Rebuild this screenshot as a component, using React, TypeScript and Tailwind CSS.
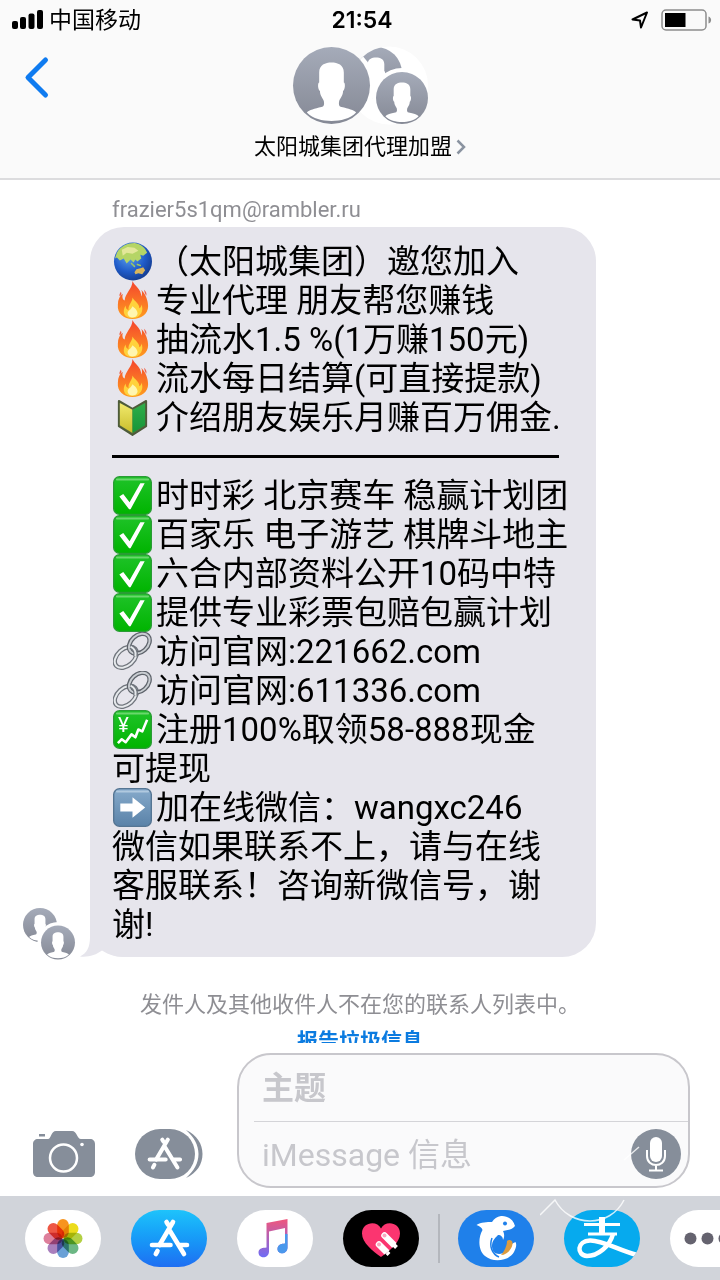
import { ReactNode } from "react";

type EmojiName = "globe" | "fire" | "beginner" | "check" | "link" | "chart" | "arrow";

type Line = { emoji?: EmojiName; text?: string; rule?: boolean };

const lines: Line[] = [
    { emoji: "globe", text: "（太阳城集团）邀您加入" },
    { emoji: "fire", text: "专业代理 朋友帮您赚钱" },
    { emoji: "fire", text: "抽流水1.5 %(1万赚150元)" },
    { emoji: "fire", text: "流水每日结算(可直接提款)" },
    { emoji: "beginner", text: "介绍朋友娱乐月赚百万佣金." },
    { rule: true },
    { emoji: "check", text: "时时彩 北京赛车 稳赢计划团" },
    { emoji: "check", text: "百家乐 电子游艺 棋牌斗地主" },
    { emoji: "check", text: "六合内部资料公开10码中特" },
    { emoji: "check", text: "提供专业彩票包赔包赢计划" },
    { emoji: "link", text: "访问官网:221662.com" },
    { emoji: "link", text: "访问官网:611336.com" },
    { emoji: "chart", text: "注册100%取领58-888现金" },
    { text: "可提现" },
    { emoji: "arrow", text: "加在线微信：wangxc246" },
    { text: "微信如果联系不上，请与在线" },
    { text: "客服联系！咨询新微信号，谢" },
    { text: "谢!" },
];

const emojiArt: Record<EmojiName, ReactNode> = {
    globe: (
        <>
            <circle cx="20.500" cy="20" r="19.500" fill="url(#sea)" />
            <path d="M4 11 C8 4 15 1 22 1 C29 2 33 6 35 11 L31 14 L28 13 L29 17 L25 20 L23 18 L21 21 L18 18 L14 22 L11 17 L7 19 L4 16 L2 17Z" fill="#b5d566" />
            <path d="M9 8 L15 5 L22 6 L26 9 L20 12 L14 11 L10 14Z" fill="#e3e79a" />
            <path d="M22 31 L24 28 L28 27 L31 26 L33 29 L30 33 L26 32 L23 33Z" fill="#d9b55c" />
            <path d="M19 22 L22 25 M25 23 L28 24" stroke="#9cc765" strokeWidth="1.6" strokeLinecap="round" />
        </>
    ),
    fire: (
        <>
            <path d="M20 0 C22 5 29 8 29 16 C30 14 30 11 29 9 C34 14 36 21 36 26 C36 34 29 39 20 39 C11 39 4 33 5 24 C5 19 7 15 10 13 C9 17 10 19 12 20 C12 13 20 8 20 0Z" fill="url(#flame)" />
            <path d="M20 17 C22 21 27 23 27 28 C29 27 29 25 29 24 C32 29 29 38 20 38 C11 38 9 31 13 25 C13 28 14 29 16 30 C15 25 20 22 20 17Z" fill="#ffd23c" />
            <path d="M20 26 C24 29 27 33 24 36 C21 39 15 37 15 33 C15 31 19 29 20 26Z" fill="#fff6b0" />
            <path d="M8 11 C7 13 6 14 7 16 C9 14 9 13 8 11Z M32 9 C34 11 35 13 34 15 C33 13 32 11 32 9Z" fill="#f0604a" />
        </>
    ),
    beginner: (
        <>
            <path d="M6 3 L20 11 L34 3 V29 L20 38 L6 29Z" fill="#5b6a3c" stroke="#4d5b3a" strokeWidth="2" strokeLinejoin="round" />
            <path d="M7 5 L20 12 V36 L7 28Z" fill="url(#leafL)" />
            <path d="M33 5 L20 12 V36 L33 28Z" fill="url(#leafR)" />
        </>
    ),
    check: (
        <>
            <rect x="0.7" y="0.7" width="38.6" height="38.6" rx="6" fill="url(#green)" stroke="#2a9c35" strokeWidth="1.4" />
            <path d="M4 3.5 H36" stroke="#8be08c" strokeWidth="2" strokeLinecap="round" opacity=".7" />
            <path d="M6.500 21 L10.500 18.500 L17 27 L28 7.500 L32.500 7.500 L18 34 L16.500 34Z" fill="#fff" />
        </>
    ),
    link: (
        <g fill="none">
            <ellipse cx="13" cy="26" rx="13" ry="8.5" transform="rotate(-42 13 26)" stroke="#70757d" strokeWidth="4.6" />
            <ellipse cx="13" cy="26" rx="13" ry="8.5" transform="rotate(-42 13 26)" stroke="#e6e9ec" strokeWidth="2" />
            <ellipse cx="27" cy="12" rx="12" ry="8.5" transform="rotate(-42 27 12)" stroke="#5e636b" strokeWidth="4.6" />
            <ellipse cx="27" cy="12" rx="12" ry="8.5" transform="rotate(-42 27 12)" stroke="#c9cdd2" strokeWidth="2" />
            <path d="M18 15 C22 17 24 20 23 25" stroke="#70757d" strokeWidth="4.6" />
            <path d="M18 15 C22 17 24 20 23 25" stroke="#e6e9ec" strokeWidth="2" />
        </g>
    ),
    chart: (
        <>
            <rect x="0.7" y="0.7" width="38.6" height="38.6" rx="6" fill="url(#green)" stroke="#2a9c35" strokeWidth="1.4" />
            <path d="M4 3.5 H36" stroke="#8be08c" strokeWidth="2" strokeLinecap="round" opacity=".7" />
            <text x="5" y="23" fontSize="21" fill="#fff" fontFamily="Roboto, sans-serif">¥</text>
            <path d="M5 34 L9 30 L13 33 L19 25 L23 28 L26 20 L30 22 L35 10" fill="none" stroke="#fff" strokeWidth="2.6" strokeLinejoin="round" />
        </>
    ),
    arrow: (
        <>
            <rect x="0.7" y="0.7" width="38.6" height="38.6" rx="6" fill="url(#slate)" stroke="#557593" strokeWidth="1.4" />
            <path d="M4 3.5 H36" stroke="#c3d8ea" strokeWidth="2" strokeLinecap="round" opacity=".7" />
            <path d="M7.500 16 H20 V9.5 L33 20 L20 30.5 V24 H7.500Z" fill="#fff" />
        </>
    ),
};

function Emoji({ name }: { name: EmojiName }) {
    return (
        <svg viewBox="0 0 40 40" className="ml-px mr-1 size-[39px] shrink-0" aria-hidden="true">
            {emojiArt[name]}
        </svg>
    );
}

// Gradients shared by all the drawings on the page
function Gradients() {
    const stops: [string, string, string][] = [
        ["avatar", "#a5abb9", "#858995"],
        ["flame", "#f4442e", "#ff9d1e"],
        ["leafL", "#f1ea6d", "#c9bd2b"],
        ["leafR", "#2fae4a", "#179437"],
        ["green", "#1fc329", "#00b400"],
        ["slate", "#86aacb", "#5a82a8"],
        ["note", "#f0567c", "#6f6cf5"],
    ];
    return (
        <svg className="absolute size-0" aria-hidden="true">
            <defs>
                {stops.map(([id, from, to]) => (
                    <linearGradient key={id} id={id} x1="0" y1="0" x2="0" y2="1">
                        <stop offset="0" stopColor={from} />
                        <stop offset="1" stopColor={to} />
                    </linearGradient>
                ))}
                <radialGradient id="sea" cx=".4" cy=".35" r=".7">
                    <stop offset="0" stopColor="#5fa4ee" />
                    <stop offset=".6" stopColor="#1f5bc9" />
                    <stop offset="1" stopColor="#143a8c" />
                </radialGradient>
            </defs>
        </svg>
    );
}

function Person({ cx, cy, r }: { cx: number; cy: number; r: number }) {
    return (
        <g transform={`translate(${cx - r} ${cy - r}) scale(${r / 50})`}>
            <circle cx="50" cy="50" r="50" fill="url(#avatar)" />
            <path
                d="M50 20 C58 20 66 23 66 33 L66 46 C68 46 68 55 65 57 C65 63 61 67 60 70 C59 75 60 77 63 78 C72 80 79 82 82 85 C74 93 62 96 50 96 C38 96 26 93 18 85 C21 82 28 80 37 78 C40 77 41 75 40 70 C39 67 35 63 35 57 C32 55 32 46 34 46 L34 33 C34 23 42 20 50 20Z"
                fill="#fff"
            />
        </g>
    );
}

function StatusBar() {
    return (
        <div className="grid h-10 grid-cols-3 items-center pl-3 pr-2">
            <div className="flex items-center gap-1.5">
                <svg viewBox="0 0 31 20" className="h-5 w-[31px]" aria-hidden="true">
                    <rect x="0" y="11" width="6" height="8" rx="2" />
                    <rect x="8" y="7" width="6" height="12" rx="2" />
                    <rect x="16.500" y="3.500" width="6" height="15.500" rx="2" />
                    <rect x="25" y="0" width="6" height="19" rx="2" />
                </svg>
                <span className="pt-0.5 text-[23px] leading-7">中国移动</span>
            </div>
            <span className="text-center font-[Inter,sans-serif] text-[23px] font-semibold leading-7">21:54</span>
            <div className="flex items-center justify-end gap-3">
                <svg viewBox="0 0 18 18" className="size-[18px]" aria-hidden="true">
                    <path d="M1.500 8.500 L16 1.500 L10 16.500 L9 9.500Z" fill="none" stroke="#000" strokeWidth="2" strokeLinejoin="round" />
                </svg>
                <svg viewBox="0 0 51 22" className="h-[22px] w-[51px]" aria-hidden="true">
                    <rect x="1" y="1" width="44" height="20" rx="4" fill="none" stroke="#8d8d8d" strokeWidth="1.500" />
                    <rect x="4" y="4" width="20.500" height="14" />
                    <path d="M47.500 7.500 C51 8.500 51 13.500 47.500 14.500Z" fill="#8d8d8d" />
                </svg>
            </div>
        </div>
    );
}

function Header() {
    return (
        <header className="shrink-0 border-b-2 border-[#dcdcde] bg-[#fafafa] pb-[17px]">
            <StatusBar />
            <div className="grid grid-cols-[1fr_auto_1fr]">
                <div className="pl-6 pt-4">
                    <button type="button" aria-label="返回" className="block">
                        <svg viewBox="0 0 26 44" className="h-11 w-[26px]" aria-hidden="true">
                            <path d="M21.500 4 L4 21.500 L21.500 39" fill="none" stroke="#0f7bf0" strokeWidth="5" strokeLinecap="round" strokeLinejoin="round" />
                        </svg>
                    </button>
                </div>
                <button type="button" className="flex flex-col items-center gap-2 pt-1.5">
                    <svg viewBox="0 0 136 79" className="h-[79px] w-[136px]" aria-hidden="true">
                        <clipPath id="group">
                            <circle cx="97" cy="39.500" r="39" />
                        </clipPath>
                        <g clipPath="url(#group)">
                            <rect width="136" height="79" fill="#fff" />
                            <Person cx={84} cy={27} r={26} />
                            <circle cx="110" cy="52" r="30" fill="#fff" />
                            <circle cx="39.500" cy="39.500" r="43" fill="#fff" />
                        </g>
                        <Person cx={110} cy={52} r={26} />
                        <Person cx={39.5} cy={39.5} r={38.5} />
                    </svg>
                    <span className="flex items-center gap-1 text-[22px] leading-7">
                        太阳城集团代理加盟
                        <svg viewBox="0 0 10 16" className="h-4 w-2.5" aria-hidden="true">
                            <path d="M1.500 1.500 L8 8 L1.500 14.500" fill="none" stroke="#8a93a0" strokeWidth="2.500" />
                        </svg>
                    </span>
                </button>
            </div>
        </header>
    );
}

function Message() {
    return (
        <div className="flex items-end gap-3.5 pl-[23px]">
            <svg viewBox="0 0 53 52" className="-mb-[3px] h-[52px] w-[53px] shrink-0" aria-hidden="true">
                <Person cx={17} cy={17} r={17} />
                <circle cx="35" cy="34.500" r="20.500" fill="#fff" />
                <Person cx={35} cy={34.5} r={17} />
            </svg>
            <div className="relative w-full max-w-[506px] rounded-[34px] bg-[#e6e5ec] px-[22px] pb-[13px] pt-[15px] text-[33px] leading-[39px]">
                <svg viewBox="0 0 46 36" className="absolute -left-2.5 bottom-0 h-9 w-[46px]" aria-hidden="true">
                    <path d="M10 0 V16 C10 26 7 32 0 35.500 C8 36.500 16 34 22 29.500 C29 34 36 36 46 36 V0Z" fill="#e6e5ec" />
                </svg>
                {lines.map((line, i) =>
                    line.rule ? (
                        <div key={i} className="flex h-[39px] items-center">
                            <hr className="w-[447px] border-t-[3px] border-black" />
                        </div>
                    ) : (
                        <p key={i} className="relative flex items-center whitespace-pre">
                            {line.emoji && <Emoji name={line.emoji} />}
                            {line.text}
                        </p>
                    )
                )}
            </div>
        </div>
    );
}

// The three bars of the App Store mark
function StoreMark() {
    return (
        <g fill="none" stroke="#fff" strokeLinecap="round">
            <path d="M24 3 L10.500 26 M17.500 3 L19 5.500 M21 12 L35 35" strokeWidth="4.600" />
            <path d="M3 26 H21.500 M31 26 H38" strokeWidth="4.600" />
            <path d="M8.500 32 L6.800 35" strokeWidth="4.600" />
        </g>
    );
}

function Composer() {
    return (
        <form className="flex shrink-0 items-end bg-white pb-2 pl-[33px] pr-[30px] pt-2.5" onSubmit={(e) => e.preventDefault()}>
            <button type="button" aria-label="相机" className="mb-[9px] mr-10 shrink-0">
                <svg viewBox="0 0 62 50" className="h-[50px] w-[62px]" aria-hidden="true">
                    <rect x="6" y="5" width="6" height="2.500" fill="#868e9a" />
                    <path d="M5 10 H15 C18 10 18 2 23 2 H39 C44 2 44 10 48 10 H57 C60 10 62 12 62 15 V43 C62 46 60 48 57 48 H5 C2 48 0 46 0 43 V15 C0 12 2 10 5 10Z" fill="#868e9a" />
                    <circle cx="30.500" cy="29" r="13.500" fill="none" stroke="#fff" strokeWidth="2.500" />
                    <circle cx="49" cy="15.500" r="1.800" fill="#fff" />
                </svg>
            </button>
            <button type="button" aria-label="App" className="mb-[9px] mr-[34px] shrink-0">
                <svg viewBox="0 0 68 50" className="h-[50px] w-[68px]" aria-hidden="true">
                    <rect width="60" height="50" rx="25" fill="#868e9a" />
                    <path d="M51 1 C62 6 67.500 15 67.500 25 C67.500 35 62 44 51 49 C59 42 63.500 34 63.500 25 C63.500 16 59 8 51 1Z" fill="#868e9a" />
                    <g transform="translate(12 8) scale(.87)">
                        <StoreMark />
                    </g>
                </svg>
            </button>
            <div className="min-w-0 flex-1 rounded-[34px] border-2 border-[#c8c7cc] bg-[#fafafb]">
                <div className="ml-[15px] border-b border-[#d4d4d8]">
                    <input
                        type="text"
                        aria-label="主题"
                        placeholder="主题"
                        className="block h-[66px] w-full bg-transparent pl-2 text-[32px] font-bold outline-none placeholder:text-[#c7c7cc]"
                    />
                </div>
                <div className="flex items-center pl-[23px] pr-[7px]">
                    <input
                        type="text"
                        aria-label="iMessage 信息"
                        placeholder="iMessage 信息"
                        className="block h-16 min-w-0 flex-1 bg-transparent pt-0.5 text-[32px] outline-none placeholder:text-[#c7c7cc]"
                    />
                    <button type="button" aria-label="语音" className="shrink-0">
                        <svg viewBox="0 0 50 50" className="size-[50px]" aria-hidden="true">
                            <circle cx="25" cy="25" r="25" fill="#868e9a" />
                            <rect x="19" y="8" width="12" height="25" rx="6" fill="#fff" />
                            <path d="M16 21 V27 C16 39 34 39 34 27 V21 M25 36 V41 M18 41.500 H32" fill="none" stroke="#fff" strokeWidth="2" />
                        </svg>
                    </button>
                </div>
            </div>
        </form>
    );
}

const petals = ["#f7941e", "#ecdc1c", "#b3d043", "#6cb784", "#69a0d6", "#a97fbd", "#dd7f9b", "#ee5744"];

const apps: { name: string; className: string; art: ReactNode }[] = [
    {
        name: "照片",
        className: "bg-white",
        art: petals.map((color, i) => (
            <rect key={color} x="32.200" y="9" width="11.600" height="19" rx="5.800" fill={color} transform={`rotate(${i * 45} 38 28.500)`} style={{ mixBlendMode: "multiply" }} />
        )),
    },
    {
        name: "App Store",
        className: "bg-linear-to-b from-[#1fc3fb] to-[#1f6ef2]",
        art: (
            <g transform="translate(18 9)">
                <StoreMark />
            </g>
        ),
    },
    {
        name: "音乐",
        className: "bg-white",
        art: (
            <>
                <path d="M29.500 13 L50.500 9 V37.500 C50.500 45 40 45 40.500 38.500 C41 34 45 34 48 33.500 V18 L32 21.500 V41.500 C32 49 21.500 49 21.500 42.500 C21.500 38 26 38 29.500 37.500Z" fill="url(#note)" />
                <path d="M50.500 24 V37.500 C50.500 45 40 45 40.500 38.500 C41 34 45 34 48 33.500 V24Z" fill="#4a98ec" />
            </>
        ),
    },
    {
        name: "Digital Touch",
        className: "bg-black",
        art: (
            <>
                <clipPath id="heart">
                    <path d="M38 47 C30 41 19 33 19 23.500 C19 12 34 10 38 18.500 C42 10 57 12 57 23.500 C57 33 46 41 38 47Z" />
                </clipPath>
                <g clipPath="url(#heart)">
                    <rect x="15" y="8" width="46" height="42" fill="#fb3570" />
                    <path d="M41.500 25.500 L56 40 M36 34.500 L50 48.500" stroke="#fff" strokeWidth="6.500" strokeLinecap="round" />
                    <circle cx="41.500" cy="25.500" r="2" fill="#f7a8bf" />
                    <circle cx="36" cy="34.500" r="2" fill="#f7a8bf" />
                </g>
                <path d="M51 35 L53.500 37.500 M44 42.500 L46 44.500" stroke="#fff" strokeWidth="4" />
            </>
        ),
    },
    {
        name: "携程",
        className: "bg-[#1f80ea]",
        art: (
            <>
                <path d="M57 16 C55 9 49 5.500 43 6 C39 6.500 36 9 34 12 C29 12 23 12 18.500 15 C22 16 24 18 24.500 20 C20 28 20 40 27 46 C35 53 51 51 56 42 C58 38 59 35 57.500 32 C54 33 51 37 48 41 C43 46 34 45 34 36 C34 31 37 28 40 25 C43 25 45 27 45 30 C47 26 46 23 45 21 C49 20 54 20 57 16Z" fill="#fff" />
                <path d="M49 31 C51 29 55 30 54.500 34 C54 39 49 45 43 45 C46 42 49 36 49 31Z" fill="#dd9b3e" />
                <circle cx="47" cy="13.500" r="2" fill="#1f80ea" />
                <path d="M34 28 C31 36 34 44 41 47" fill="none" stroke="#1f80ea" strokeWidth="1.500" />
            </>
        ),
    },
    {
        name: "支付宝",
        className: "bg-[#06aaee]",
        art: (
            <g fill="none" stroke="#fff">
                <path d="M20 14.500 H56 M24 24 H53" strokeWidth="3" />
                <path d="M38 7 V24" strokeWidth="6" />
                <path d="M49 24 C46 36 34 46 23 46 C12 45 13 31 26 30.500 C38 30 54 40 73 45" strokeWidth="4.500" />
            </g>
        ),
    },
];

function AppStrip() {
    return (
        <nav className="flex shrink-0 items-center gap-[30px] overflow-hidden bg-[#d1d4da] pb-[13px] pl-[25px] pt-3.5">
            {apps.map((app, i) => (
                <div key={app.name} className="flex shrink-0 items-center">
                    {i === 4 && <span className="-ml-[11px] mr-[18px] h-[49px] w-0.5 bg-[#b4b7bd]" />}
                    <button type="button" aria-label={app.name} className={`overflow-hidden rounded-full ${app.className}`}>
                        <svg viewBox="0 0 76 57" className="h-[57px] w-[76px]" aria-hidden="true">
                            {app.art}
                        </svg>
                    </button>
                </div>
            ))}
            <button type="button" aria-label="更多" className="shrink-0 rounded-full bg-white">
                <svg viewBox="0 0 76 57" className="h-[57px] w-[76px]" aria-hidden="true" fill="#65636f">
                    <circle cx="20.500" cy="28.500" r="6" />
                    <circle cx="37.500" cy="28.500" r="6" />
                    <circle cx="54.500" cy="28.500" r="6" />
                </svg>
            </button>
        </nav>
    );
}

export default function App() {
    return (
        <div className="relative flex h-screen flex-col overflow-hidden bg-white font-[Roboto,'Noto_Sans_CJK_SC',sans-serif] text-black" lang="zh-CN">
            <Gradients />
            <Header />
            <main className="min-h-0 flex-1 overflow-hidden pt-4">
                <p className="mb-[3px] pl-28 text-[22px] leading-7 text-[#8e8e93]">frazier5s1qm@rambler.ru</p>
                <Message />
                <p className="mt-[34px] text-center text-[22px] leading-7 text-[#8e8e93]">发件人及其他收件人不在您的联系人列表中。</p>
                <p className="mt-2 text-center text-[21px] font-bold leading-7">
                    <a href="#report" className="text-[#0b7be0]">报告垃圾信息</a>
                </p>
            </main>
            <Composer />
            <AppStrip />
            {/* Faint stamp over the lower right corner */}
            <svg viewBox="0 0 100 76" className="pointer-events-none absolute bottom-[58px] right-20 h-[76px] w-[100px]" aria-hidden="true">
                <path d="M0 69 L15 54 C30 82 70 82 84 54 M84 14 L99 1" fill="none" stroke="#fff" strokeOpacity=".8" strokeWidth="1.500" />
            </svg>
        </div>
    );
}
